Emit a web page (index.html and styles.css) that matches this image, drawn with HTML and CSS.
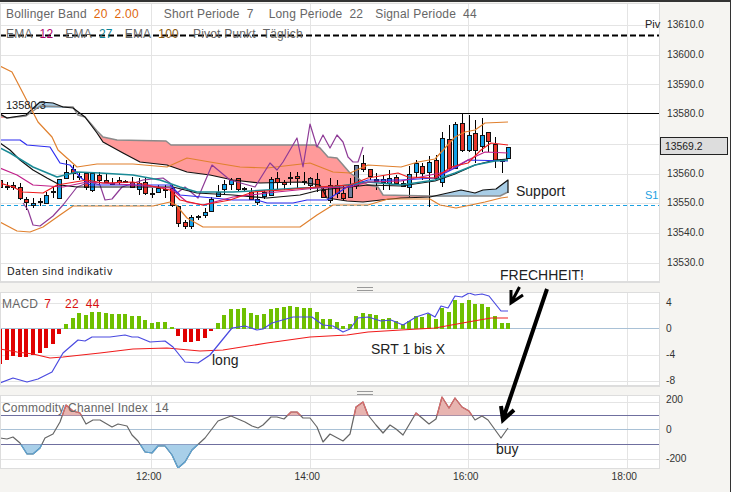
FILE: index.html
```html
<!DOCTYPE html>
<html lang="de">

<head>
    <meta charset="UTF-8">
    <title>Chart</title>
    <link rel="stylesheet" href="styles.css">
</head>

<body>

    <main class="chart">

        <section class="pane main-pane">
            <svg class="plot" viewBox="0 3 660 279" width="660" height="279">
                <path class="grid" d="M0 25.5H660M0 55.5H660M0 84.5H660M0 144.5H660M0 174.5H660M0 203.5H660M0 233.5H660M0 263.5H660M151.5 3V282M310.5 3V282M468.5 3V282M627.5 3V282" />
                <path class="pivot" d="M0 35.5H660" />
                <path class="level" d="M0 113.5H660" />
                <path class="s1" d="M0 205.5H660" />

                <polygon class="cloud-red" points="0,113 7,118 0,118" />
                <polygon class="cloud-blue" points="27,115 33,107 40,102 53,103 63,107 73,108 33,108" />
                <polygon class="cloud-red" points="97,133 103,137 117,140 166,141 171,145 315,145 320,148 328,157 337,158 350,173 368,185 378,187 383,195 430,196 430,197 401,198 381,200 363,202 347,201 327,198 320,185 300,182 260,183 233,180 210,175 187,172 167,165 140,162 123,153 103,142" />
                <polygon class="cloud-blue" points="430,197 461,190 475,193 483,190 496,189 508,180 508,192 500,196" />

                <g id="candles"></g>

                <polyline class="ln grey" points="0,115 7,118 26,116 40,106 73,107 78,115 85,117 92,125 97,131 103,137 117,140 166,141 171,145 315,145 320,148 328,157 337,158 350,173 368,185 378,187 383,195 430,196 500,196 508,192" />
                <polyline class="ln black" points="0,114 7,118 26,115 28,113 40,102 53,103 63,107 73,108 85,117 97,133 103,142 123,153 140,162 167,165 187,172 210,175 233,180 260,183 300,182 320,185 327,198 347,201 363,202 381,200 401,198 430,197 461,190 475,193 483,190 496,189 508,180 508,193" />

                <polyline class="ln orange" points="0,66 12,72 25,97 38,122 52,137 58,150 77,167 97,164 133,164 167,167 187,158 210,162 240,167 267,168 310,163 333,172 350,173 368,165 401,167 418,162 435,159 455,137 465,132 475,130 485,123 508,122" />
                <polyline class="ln orange" points="0,222 17,231 30,232 43,227 60,215 73,206 133,206 153,206 170,202 176,205 187,218 203,227 300,227 317,215 333,205 368,205 388,199 430,199 440,205 456,208 471,205 485,202 501,198 508,197" />
                <polyline class="ln purple" points="23,203 28,210 33,225 40,226 53,216 63,205 77,187 90,182 100,185 105,200 112,199 122,187 143,180 163,178 170,183 177,193 185,187 198,198 212,165 230,180 255,187 270,163 277,170 283,162 297,138 303,167 310,124 317,147 323,135 330,148 337,135 343,142 348,157 353,162 358,162 363,147" />
                <polyline class="ln black" points="0,143 10,150 20,160 33,170 47,178 60,185 77,187 133,187 173,187 197,193 233,195 267,198 300,195 320,190 350,187 368,185 401,186 435,181 455,174 475,165 495,160 508,159" />
                <polyline class="ln blue" points="0,140 20,140 27,145 50,147 60,163 70,165 80,177 90,185 170,185 180,195 213,198 233,200 257,200 267,203 293,203 307,200 327,200 347,187 368,180 401,180 435,178 455,168 468,160 508,161" />
                <polyline class="ln teal" points="0,148 10,153 33,167 57,177 77,172 100,173 133,175 160,180 180,187 197,192 233,192 267,190 300,188 333,187 368,182 401,185 435,180 455,173 475,165 495,161 508,160" />
                <polyline class="ln magenta" points="0,168 17,175 33,185 63,187 87,182 133,185 170,188 187,202 203,205 233,197 267,193 317,188 350,187 368,182 401,181 445,172 468,160 485,152 508,153" />
                <polyline class="ln red" points="0,183 13,187 23,192 43,193 57,185 87,180 103,183 133,182 170,190 180,200 203,205 230,200 253,192 283,190 317,187 350,185 368,178 398,173 408,177 435,178 451,167 468,163 481,150 491,143 508,145" />
            </svg>
            <ul class="axis price-axis">
                <li>13610.0</li>
                <li>13600.0</li>
                <li>13590.0</li>
                <li>13580.0</li>
                <li></li>
                <li>13560.0</li>
                <li>13550.0</li>
                <li>13540.0</li>
                <li>13530.0</li>
            </ul>
            <div class="price-box">13569.2</div>

            <div class="legend legend-one">
                <span class="name">Bollinger Band</span><b class="c-orange">20</b><b class="c-orange">2.00</b>
                <span class="name gap-short">Short Periode</span><b>7</b>
                <span class="name gap-long">Long Periode</span><b>22</b>
                <span class="name gap-signal">Signal Periode</span><b>44</b>
            </div>
            <div class="legend legend-two">
                <span class="name">EMA</span><b class="c-magenta">12</b>
                <span class="name gap-ema">EMA</span><b class="c-teal">27</b>
                <span class="name gap-ema">EMA</span><b class="c-brown">100</b>
                <span class="name gap-pivot">Pivot Punkt&nbsp; Täglich</span>
            </div>
            <span class="tag tag-level">13580.3</span>
            <span class="tag tag-piv">Piv</span>
            <span class="tag tag-s1">S1</span>
            <span class="disclaimer">Daten sind indikativ</span>
        </section>

        <div class="sep"><i class="grip"></i></div>

        <section class="pane macd-pane">
            <svg class="plot" viewBox="0 292 660 94" width="660" height="94">
                <path class="grid" d="M0 303.5H660M0 355.5H660M0 381.5H660M151.5 292V386M310.5 292V386M468.5 292V386M627.5 292V386" />
                <path class="zero" d="M0 328.5H660" />
                <g id="bars"></g>
                <polyline class="ln red" points="0,349 17,352 33,354 50,358 63,357 100,353 133,349 167,348 200,351 223,350 267,343 310,337 347,335 368,332 401,330 435,328 468,322 491,318 508,318" />
                <polyline class="ln blue" points="0,383 13,378 27,382 38,379 52,372 63,353 78,340 85,341 92,337 110,337 125,335 132,337 138,337 150,342 165,341 173,347 185,362 198,363 210,355 232,328 245,326 257,330 263,329 272,323 293,317 312,317 323,325 333,326 343,332 350,329 358,318 368,317 381,321 391,320 403,325 416,317 428,313 435,317 441,306 448,308 455,296 462,297 469,293 475,295 482,294 489,296 501,311 508,311" />
            </svg>
            <ul class="axis macd-axis">
                <li>4</li>
                <li>0</li>
                <li>-4</li>
                <li>-8</li>
            </ul>
            <div class="legend legend-macd">
                <span class="name">MACD</span><b class="c-red">7</b><b class="c-red">22</b><b class="c-red">44</b>
            </div>
        </section>

        <div class="sep"><i class="grip"></i></div>

        <section class="pane cci-pane">
            <svg class="plot" viewBox="0 395 660 74" width="660" height="74">
                <defs>
                    <clipPath id="above"><rect x="0" y="395" width="660" height="20.5" /></clipPath>
                    <clipPath id="below"><rect x="0" y="444.5" width="660" height="25" /></clipPath>
                    <polyline id="cci" points="0,438 7,439 13,437 20,443 27,454 33,454 40,448 45,438 53,434 60,422 66,405 73,411 80,413 86,424 93,420 100,420 112,427 118,424 127,426 132,435 138,441 145,452 152,453 158,446 165,446 172,455 178,468 185,462 192,450 205,438 218,421 231,416 245,422 252,426 258,428 263,425 271,417 277,417 284,419 291,412 297,412 303,418 310,418 317,427 323,442 330,434 343,441 350,434 356,407 363,402 368,415 376,425 383,433 390,425 396,429 403,435 416,413 422,418 429,424 436,419 442,397 449,408 455,398 462,407 469,411 475,420 482,416 488,420 501,438 508,428" />
                </defs>
                <path class="grid" d="M0 402.5H660M0 459.5H660M151.5 395V469M310.5 395V469M468.5 395V469M627.5 395V469" />
                <path class="zero" d="M0 429.5H660" />
                <path class="band" d="M0 415.5H660M0 444.5H660" />
                <use href="#cci" class="cci-fill-red" clip-path="url(#above)" />
                <use href="#cci" class="cci-fill-blue" clip-path="url(#below)" />
                <use href="#cci" class="ln cci-line" />
                <use href="#cci" class="ln cci-red" clip-path="url(#above)" />
                <use href="#cci" class="ln cci-blue" clip-path="url(#below)" />
            </svg>
            <ul class="axis cci-axis">
                <li>200</li>
                <li>0</li>
                <li>-200</li>
            </ul>
            <div class="legend legend-cci">
                <span class="name">Commodity Channel Index</span><b>14</b>
            </div>
        </section>

        <footer class="time-axis">
            <span>12:00</span>
            <span>14:00</span>
            <span>16:00</span>
            <span>18:00</span>
        </footer>

        <!-- hand drawn notes on top of the chart -->
        <svg class="scribble" viewBox="0 0 731 492" width="731" height="492">
            <path class="pen-thin" d="M519.5 287 511 303M511 290 511 303 523 295" />
            <path class="pen-thick" d="M547 289 503 419M501 406 503 420 514 410" />
        </svg>
        <span class="note note-support">Support</span>
        <span class="note note-frech">FRECHHEIT!</span>
        <span class="note note-srt">SRT 1 bis X</span>
        <span class="note note-long">long</span>
        <span class="note note-buy">buy</span>

    </main>

    <script src="chart.js"></script>
</body>

</html>
```

FILE: styles.css
```css
* {
    box-sizing: border-box;
}

body {
    margin: 0;
    background-color: #fff;
    font-family: "Liberation Sans", Arial, sans-serif;
    overflow: hidden;
}

.chart {
    position: relative;
    width: 731px;
    height: 492px;
    padding-top: 1px;
    border-top: 2px solid #333;
    border-right: 1px solid #333;
    background-color: #f5f4f1;
}

.pane {
    position: relative;
    display: flex;
}

.main-pane {
    height: 279px;
}

.macd-pane {
    height: 94px;
}

.cci-pane {
    height: 74px;
    margin-top: -1px;
}

.plot {
    display: block;
    flex: none;
    background-color: #fff;
    outline: 1px solid #ddd;
    outline-offset: -1px;
}

.grid {
    stroke: #e4e4e4;
    fill: none;
}

.pivot {
    stroke: #000;
    stroke-width: 2;
    stroke-dasharray: 6 3;
    fill: none;
}

.level {
    stroke: #000;
    fill: none;
}

.s1 {
    stroke: #1ba1e2;
    stroke-dasharray: 4 3;
    fill: none;
}

.zero {
    stroke: #a9c1d6;
    fill: none;
}

.band {
    stroke: #6f6f9f;
    fill: none;
}

.cloud-red {
    fill: #ff9a9a;
}

.cloud-blue {
    fill: #a8cde6;
}

.ln {
    fill: none;
    stroke-width: 1.2;
    stroke-linejoin: round;
}

.grey {
    stroke: #8a8a8a;
    stroke-width: 1.5;
}

.black {
    stroke: #111;
}

.orange {
    stroke: #e0802e;
}

.purple {
    stroke: #8e3a96;
}

.blue {
    stroke: #2d2df0;
}

.macd-pane .blue {
    stroke: #4a4ae0;
}

.teal {
    stroke: #1a8a96;
    stroke-width: 1.5;
}

.magenta {
    stroke: #c0208a;
}

.red {
    stroke: #f01c1c;
}

.wick {
    stroke: #000;
    fill: none;
}

.body {
    stroke: #111;
}

.body-b {
    fill: #12a0e8;
}

.body-r {
    fill: #e8352a;
}

.body-k {
    fill: #222;
}

.body-g {
    fill: #6f7f9f;
}

.bar-up {
    fill: #6fc000;
}

.bar-down {
    fill: #e00000;
}

.cci-fill-red {
    fill: #e8b4b0;
    stroke: none;
}

.cci-fill-blue {
    fill: #a8cfe9;
    stroke: none;
}

.cci-line {
    stroke: #666;
}

.cci-red {
    stroke: #dd6a6a;
}

.cci-blue {
    stroke: #5aa5d8;
}

.axis {
    list-style: none;
    margin: 0;
    padding: 0 0 0 6px;
    flex: none;
    width: 70px;
    font-size: 10.2px;
    color: #333;
}

.axis li {
    display: flex;
    align-items: center;
}

.price-axis {
    padding-top: 7px;
    padding-left: 7px;
}

.price-axis li {
    height: 29.7px;
}

.macd-axis {
    margin-top: -3px;
}

.macd-axis li {
    height: 26px;
}

.cci-axis {
    margin-top: -10px;
}

.cci-axis li {
    height: 29.5px;
}

.price-box {
    position: absolute;
    left: 660px;
    top: 134px;
    width: 68px;
    height: 18px;
    padding-left: 4px;
    line-height: 17px;
    font-size: 10.4px;
    color: #222;
    background-color: #ddd;
    border: 1px solid #222;
}

.legend {
    position: absolute;
    display: flex;
    align-items: center;
    font-size: 12px;
    letter-spacing: 0.2px;
    white-space: nowrap;
    color: #666;
}

.legend b {
    font-weight: normal;
    margin-left: 7px;
}

.legend-one {
    left: 6px;
    top: 4px;
    height: 14px;
}

.legend-two {
    left: 6px;
    top: 24px;
    height: 14px;
}

.gap-short {
    margin-left: 25px;
}

.gap-long {
    margin-left: 15px;
}

.gap-signal {
    margin-left: 12px;
}

.gap-ema {
    margin-left: 12px;
}

.gap-pivot {
    margin-left: 14px;
}

.legend-macd {
    left: 2px;
    top: 5px;
    height: 14px;
}

.legend-macd .name + b {
    margin-left: 6px;
}

.legend-macd b + b {
    margin-left: 14px;
}

.legend-macd b + b + b {
    margin-left: 7px;
}

.legend-cci {
    left: 2px;
    top: 6px;
    height: 14px;
}

.c-orange {
    color: #e0660a;
}

.c-magenta {
    color: #b0006e;
}

.c-teal {
    color: #0e8496;
}

.c-brown {
    color: #8a5a0e;
}

.c-red {
    color: #d81010;
}

.tag {
    position: absolute;
    font-size: 11px;
    line-height: 12px;
    color: #222;
}

.tag-level {
    left: 6px;
    top: 96px;
}

.tag-piv {
    left: 645px;
    top: 15px;
}

.tag-s1 {
    left: 645px;
    top: 186px;
    color: #1ba1e2;
}

.disclaimer {
    position: absolute;
    left: 7px;
    top: 263px;
    font-family: "DejaVu Sans", sans-serif;
    font-size: 10px;
    letter-spacing: 0.3px;
    line-height: 12px;
    color: #222;
}

.sep {
    position: relative;
    height: 10px;
    width: 660px;
    border-top: 1px solid #ddd;
}

.grip {
    position: absolute;
    left: 357px;
    top: 4px;
    width: 16px;
    height: 4px;
    border-top: 1px solid #999;
    border-bottom: 1px solid #999;
}

.time-axis {
    display: flex;
    height: 22px;
    padding: 2px 0 0 136px;
    font-size: 10.2px;
    line-height: 12px;
    color: #333;
}

.time-axis span {
    flex: none;
    width: 158.5px;
}

.scribble {
    position: absolute;
    left: 0;
    top: -2px;
    pointer-events: none;
}

.pen-thin {
    fill: none;
    stroke: #000;
    stroke-width: 3;
}

.pen-thick {
    fill: none;
    stroke: #000;
    stroke-width: 4;
}

.note {
    position: absolute;
    font-size: 14px;
    line-height: 16px;
    color: #222;
    white-space: nowrap;
}

.note-support {
    left: 516px;
    top: 181px;
}

.note-frech {
    left: 500px;
    top: 265px;
}

.note-srt {
    left: 371px;
    top: 339px;
}

.note-long {
    left: 212px;
    top: 350px;
}

.note-buy {
    left: 496px;
    top: 439px;
}
```

FILE: chart.js
```js
const NS = "http://www.w3.org/2000/svg";
const STEP = 6.6;

// wick top, wick bottom, body top, body bottom, colour
const candles = [
    [180, 188, 180, 187, "r"], [182, 190, 186, 187, "k"], [182, 190, 185, 187, "r"], [183, 200, 187, 198, "r"],
    [197, 210, 199, 202, "r"], [198, 208, 203, 205, "b"], [198, 206, 201, 202, "k"], [192, 203, 195, 203, "b"],
    [187, 198, 191, 192, "k"], [179, 198, 179, 198, "b"], [160, 178, 172, 178, "b"], [165, 180, 169, 173, "r"],
    [172, 180, 176, 177, "k"], [172, 190, 173, 187, "r"], [172, 192, 173, 190, "b"], [172, 185, 175, 180, "r"],
    [173, 183, 180, 182, "r"], [178, 185, 183, 184, "k"], [177, 185, 180, 182, "r"], [180, 183, 181, 182, "k"],
    [177, 188, 182, 187, "r"], [178, 195, 183, 189, "b"], [178, 195, 182, 193, "r"], [188, 198, 193, 194, "k"],
    [185, 193, 188, 192, "b"], [185, 198, 189, 190, "k"], [185, 207, 188, 205, "r"], [206, 227, 206, 223, "r"],
    [220, 229, 222, 226, "r"], [215, 229, 217, 226, "b"], [215, 220, 216, 217, "k"], [208, 218, 212, 215, "b"],
    [197, 212, 199, 211, "b"], [185, 197, 192, 196, "b"], [180, 195, 184, 189, "b"], [178, 190, 180, 184, "b"],
    [178, 191, 178, 189, "r"], [187, 192, 188, 189, "k"], [188, 200, 192, 199, "r"], [192, 205, 199, 202, "b"],
    [190, 199, 192, 196, "b"], [177, 195, 179, 195, "b"], [172, 190, 178, 182, "r"], [180, 190, 182, 184, "r"],
    [172, 185, 177, 178, "k"], [172, 188, 176, 178, "r"], [172, 185, 181, 182, "k"], [177, 190, 178, 185, "g"],
    [173, 192, 179, 187, "r"], [187, 198, 190, 197, "r"], [178, 203, 185, 200, "g"], [180, 198, 185, 193, "r"],
    [185, 200, 193, 198, "r"], [178, 198, 184, 197, "g"], [165, 189, 165, 185, "g"], [155, 172, 163, 169, "r"],
    [169, 180, 169, 176, "r"], [173, 190, 179, 181, "k"], [175, 190, 179, 182, "b"], [170, 190, 178, 183, "b"],
    [175, 185, 177, 183, "r"], [180, 187, 183, 186, "r"], [166, 197, 174, 187, "b"], [160, 178, 163, 172, "b"],
    [163, 180, 166, 173, "r"], [156, 207, 162, 172, "b"], [155, 180, 160, 178, "r"], [132, 187, 138, 182, "b"],
    [125, 171, 139, 168, "r"], [122, 169, 124, 168, "b"], [114, 152, 123, 150, "r"], [115, 152, 135, 150, "b"],
    [120, 163, 133, 150, "r"], [118, 152, 135, 146, "b"], [132, 152, 132, 141, "r"], [137, 168, 144, 160, "r"],
    [159, 173, 159, 161, "k"], [147, 158, 147, 158, "b"]
];

// bar height above (+) or below (-) the zero line
const macd = [
    -35, -31, -27, -28, -28, -26, -24, -19, -15, -5, 5, 11, 16, 14, 17, 17, 16, 15, 15, 15,
    13, 13, 9, 6, 7, 7, 2, -7, -13, -13, -12, -9, -2, 6, 14, 20, 20, 21, 16, 14,
    15, 20, 21, 22, 23, 22, 21, 21, 17, 10, 10, 7, 3, 5, 13, 16, 15, 14, 10, 11,
    8, 5, 8, 13, 12, 15, 10, 21, 17, 29, 26, 29, 25, 25, 22, 13, 6, 6
];

function add(parent, tag, attrs) {
    const el = document.createElementNS(NS, tag);
    Object.keys(attrs).forEach(key => el.setAttribute(key, attrs[key]));
    parent.appendChild(el);
}

function drawCandles() {
    const g = document.querySelector("#candles");
    candles.forEach((c, i) => {
        const x = Math.round(i * STEP) + 0.5;
        add(g, "path", { class: "wick", d: `M${x} ${c[0]}V${c[1]}` });
        add(g, "rect", { class: `body body-${c[4]}`, x: x - 2, y: c[2] + 0.5, width: 4, height: c[3] - c[2] });
    });
}

function drawBars() {
    const g = document.querySelector("#bars");
    macd.forEach((h, i) => {
        const x = Math.round(i * STEP) - 2;
        const y = h > 0 ? 329 - h : 329;
        add(g, "rect", { class: h > 0 ? "bar-up" : "bar-down", x: x, y: y, width: 4, height: Math.abs(h) });
    });
}

drawCandles();
drawBars();
```
